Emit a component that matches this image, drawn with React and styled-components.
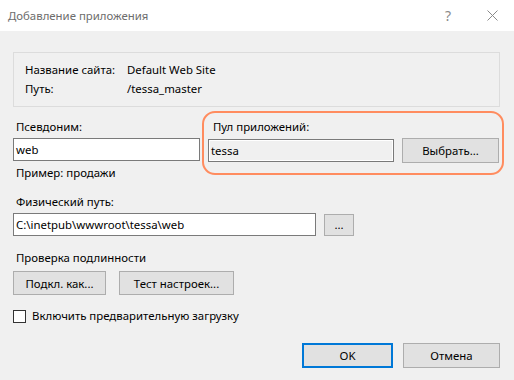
import styled, { createGlobalStyle } from 'styled-components'

const Global = createGlobalStyle`
html, body {
  margin: 0;
  padding: 0;
  background: #f0f0f0;
}
body {
  font-family: "Noto Sans", "Open Sans", sans-serif;
  font-size: 11.4px;
  color: #000;
}
`

const Window = styled.div`
width: 514px;
height: 380px;
display: flex;
flex-direction: column;
background: #f0f0f0;
overflow: hidden;
`

const TitleBar = styled.div`
height: 31px;
background: #fff;
display: flex;
align-items: center;
padding-left: 8px;
color: #6d6d6d;
`

const TitleText = styled.div`
flex: 1;
`

const TitleButton = styled.div`
width: 44px;
height: 31px;
display: flex;
align-items: center;
justify-content: center;
color: #8a8a8a;
font-size: 14px;
`

const Body = styled.div`
display: flex;
flex-direction: column;
padding: 21px 14px 0 13px;
`

const GroupBox = styled.div`
height: 55px;
box-sizing: border-box;
border: 1px solid #dcdcdc;
padding: 7px 0 0 11px;
display: grid;
grid-template-columns: 102px auto;
grid-auto-rows: 19px;
align-items: center;
`

const Row = styled.div`
display: flex;
gap: 8px;
margin-top: ${p => p.$mt || 0}px;
align-items: ${p => p.$align || 'flex-start'};
`

const Field = styled.div`
display: flex;
flex-direction: column;
gap: 3px;
position: relative;
`

const Label = styled.div`
line-height: 16px;
padding-left: 3px;
margin-top: ${p => p.$mt || 0}px;
`

const Input = styled.div`
width: ${p => p.$w}px;
height: 23px;
box-sizing: border-box;
border: 1px solid #7a7a7a;
background: ${p => (p.$readonly ? '#f0f0f0' : '#fff')};
box-shadow: ${p => (p.$readonly ? 'inset 0 0 0 1px #fff' : 'none')};
display: flex;
align-items: center;
padding-left: 2px;
`

const Button = styled.div`
width: ${p => p.$w}px;
height: ${p => p.$h || 24}px;
box-sizing: border-box;
border: ${p => (p.$default ? '2px solid #0078d7' : '1px solid #adadad')};
background: #e1e1e1;
display: flex;
align-items: center;
justify-content: center;
margin-left: ${p => p.$ml || 0}px;
`

const Highlight = styled.div`
position: absolute;
left: -6px;
top: -8px;
right: -5px;
bottom: -12px;
border: 2.5px solid #ff8c5f;
border-radius: 13px;
pointer-events: none;
`

const CheckRow = styled.label`
display: flex;
align-items: center;
gap: 6px;
margin-top: 13px;
line-height: 16px;
`

const Check = styled.span`
width: 13px;
height: 13px;
box-sizing: border-box;
border: 1px solid #333;
background: #fff;
`

const Footer = styled.div`
display: flex;
justify-content: flex-end;
gap: 10px;
margin-top: 19px;
`

const App = () => {
  return (
    <>
      <Global />
      <Window>
        <TitleBar>
          <TitleText>Добавление приложения</TitleText>
          <TitleButton>?</TitleButton>
          <TitleButton>
            <svg width="11" height="11" viewBox="0 0 11 11">
              <path d="M0.5 0.5L10.5 10.5M10.5 0.5L0.5 10.5" stroke="#8a8a8a" strokeWidth="1" />
            </svg>
          </TitleButton>
        </TitleBar>
        <Body>
          <GroupBox>
            <span>Название сайта:</span>
            <span>Default Web Site</span>
            <span>Путь:</span>
            <span>/tessa_master</span>
          </GroupBox>

          <Row $mt={12}>
            <Field>
              <Label>Псевдоним:</Label>
              <Input $w={187}>web</Input>
              <Label $mt={1}>Пример: продажи</Label>
            </Field>
            <Field>
              <Label style={{ paddingLeft: 5 }}>Пул приложений:</Label>
              <Row $align="center">
                <Input $w={186} $readonly>tessa</Input>
                <Button $w={97} $h={25}>Выбрать...</Button>
              </Row>
              <Highlight />
            </Field>
          </Row>

          <Field>
            <Label $mt={13}>Физический путь:</Label>
            <Row $align="center">
              <Input $w={303}>C:\inetpub\wwwroot\tessa\web</Input>
              <Button $w={30} $h={22}>...</Button>
            </Row>
          </Field>

          <Label $mt={14}>Проверка подлинности</Label>
          <Row $mt={5}>
            <Button $w={93}>Подкл. как...</Button>
            <Button $w={115} $ml={5}>Тест настроек...</Button>
          </Row>

          <CheckRow>
            <Check />
            Включить предварительную загрузку
          </CheckRow>

          <Footer>
            <Button $w={91} $h={25} $default>OK</Button>
            <Button $w={97} $h={25}>Отмена</Button>
          </Footer>
        </Body>
      </Window>
    </>
  )
}

export default App
